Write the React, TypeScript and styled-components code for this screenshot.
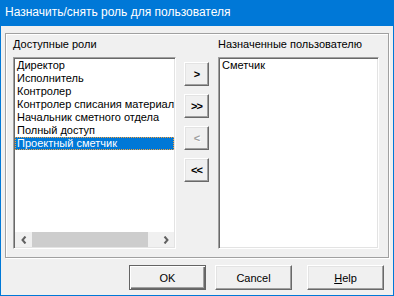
import React from "react";
import styled, { createGlobalStyle } from "styled-components";

const GlobalStyle = createGlobalStyle`
  html, body {
    margin: 0;
    padding: 0;
    background: #f0f0f0;
  }
  * {
    box-sizing: border-box;
  }
`;

const Window = styled.div`
  width: 394px;
  height: 296px;
  display: flex;
  flex-direction: column;
  background: #f0f0f0;
  font-family: "Liberation Sans", Arial, sans-serif;
  font-size: 11px;
  color: #000;
  overflow: hidden;
`;

const TitleBar = styled.div`
  height: 26px;
  flex: none;
  background: #0078d7;
  color: #fff;
  font-family: "Liberation Sans", Arial, sans-serif;
  font-size: 12px;
  line-height: 25px;
  padding-left: 5px;
  white-space: nowrap;
`;

const Body = styled.div`
  flex: 1;
  display: flex;
  flex-direction: column;
  border: 1px solid #0078d7;
  border-top: 0;
  padding: 7px 4px 0 4px;
`;

/* etched group frame */
const GroupBox = styled.div`
  height: 225px;
  border: 1px solid #a0a0a0;
  box-shadow: inset 1px 1px 0 #fff, 1px 1px 0 #fff;
  padding: 4px 0 0 7px;
  display: grid;
  grid-template-columns: 163px 25px 162px;
  column-gap: 8px;
  align-items: start;
`;

const Column = styled.div`
  display: flex;
  flex-direction: column;
`;

const RightColumn = styled(Column)`
  margin-left: 1px;
`;

const Label = styled.div`
  height: 13px;
  line-height: 13px;
  margin-bottom: 6px;
  white-space: nowrap;
`;

const ListBox = styled.div`
  height: 192px;
  background: #fff;
  border: 1px solid;
  border-color: #a0a0a0 #fff #fff #a0a0a0;
  box-shadow: inset 1px 1px 0 #696969, inset -1px -1px 0 #e3e3e3;
  padding: 1px;
  display: flex;
  flex-direction: column;
  overflow: hidden;
`;

const Items = styled.div`
  flex: 1;
  overflow: hidden;
`;

const Item = styled.div<{ $selected?: boolean }>`
  height: 13px;
  line-height: 13px;
  padding-left: 2px;
  white-space: nowrap;
  overflow: hidden;
  background: ${(p) => (p.$selected ? "#0078d7" : "transparent")};
  color: ${(p) => (p.$selected ? "#fff" : "#000")};
  outline: ${(p) => (p.$selected ? "1px dotted #f7a13a" : "none")};
  outline-offset: -1px;
`;

const ScrollBar = styled.div`
  height: 15px;
  flex: none;
  display: flex;
  align-items: stretch;
  background: #f0f0f0;
`;

const ScrollArrow = styled.div`
  width: 17px;
  display: flex;
  align-items: center;
  justify-content: center;
`;

const ScrollTrack = styled.div`
  flex: 1;
  display: flex;
`;

const ScrollThumb = styled.div`
  width: 116px;
  background: #cdcdcd;
`;

const MoveButtons = styled.div`
  margin-top: 24px;
  display: flex;
  flex-direction: column;
  gap: 8px;
`;

const RaisedButton = styled.button<{ $disabled?: boolean }>`
  margin: 0;
  padding: 0;
  font-family: "Liberation Sans", Arial, sans-serif;
  font-size: 11px;
  background: #f0f0f0;
  border: 1px solid;
  border-color: #fff #696969 #696969 #fff;
  box-shadow: inset -1px -1px 0 #a0a0a0, inset 1px 1px 0 #e3e3e3;
  color: ${(p) => (p.$disabled ? "#a0a0a0" : "#000")};
  text-shadow: ${(p) => (p.$disabled ? "1px 1px 0 #fff" : "none")};
  display: flex;
  align-items: center;
  justify-content: center;
`;

const ArrowButton = styled(RaisedButton)`
  width: 25px;
  height: 24px;
  font-weight: bold;
  letter-spacing: -1px;
`;

const Footer = styled.div`
  margin-top: 7px;
  padding-right: 5px;
  display: flex;
  justify-content: flex-end;
`;

const DialogButton = styled(RaisedButton)<{ $default?: boolean; $gap?: number }>`
  width: 77px;
  height: 25px;
  margin-left: ${(p) => p.$gap ?? 0}px;
  ${(p) =>
    p.$default &&
    `
    border-color: #646464;
    box-shadow: inset 1px 1px 0 #fff, inset -1px -1px 0 #696969, inset -2px -2px 0 #a0a0a0;
  `}
`;

const Chevron: React.FC<{ dir: "left" | "right" }> = ({ dir }) => (
  <svg width="6" height="8" viewBox="0 0 6 8">
    <path
      d={dir === "left" ? "M4.5 0.5 L1.5 4 L4.5 7.5" : "M1.5 0.5 L4.5 4 L1.5 7.5"}
      fill="none"
      stroke="#606060"
      strokeWidth="2"
    />
  </svg>
);

const available = [
  "Директор",
  "Исполнитель",
  "Контролер",
  "Контролер списания материал",
  "Начальник сметного отдела",
  "Полный доступ",
  "Проектный сметчик",
];

const assigned = ["Сметчик"];

const App: React.FC = () => {
  return (
    <>
      <GlobalStyle />
      <Window>
        <TitleBar>Назначить/снять роль для пользователя</TitleBar>
        <Body>
          <GroupBox>
            <Column>
              <Label>Доступные роли</Label>
              <ListBox>
                <Items>
                  {available.map((name, i) => (
                    <Item key={name} $selected={i === available.length - 1}>
                      {name}
                    </Item>
                  ))}
                </Items>
                <ScrollBar>
                  <ScrollArrow>
                    <Chevron dir="left" />
                  </ScrollArrow>
                  <ScrollTrack>
                    <ScrollThumb />
                  </ScrollTrack>
                  <ScrollArrow>
                    <Chevron dir="right" />
                  </ScrollArrow>
                </ScrollBar>
              </ListBox>
            </Column>

            <MoveButtons>
              <ArrowButton>&gt;</ArrowButton>
              <ArrowButton>&gt;&gt;</ArrowButton>
              <ArrowButton $disabled>&lt;</ArrowButton>
              <ArrowButton>&lt;&lt;</ArrowButton>
            </MoveButtons>

            <RightColumn>
              <Label>Назначенные пользователю</Label>
              <ListBox>
                <Items>
                  {assigned.map((name) => (
                    <Item key={name}>{name}</Item>
                  ))}
                </Items>
              </ListBox>
            </RightColumn>
          </GroupBox>

          <Footer>
            <DialogButton $default>OK</DialogButton>
            <DialogButton $gap={9}>Cancel</DialogButton>
            <DialogButton $gap={15}>
              <u>H</u>elp
            </DialogButton>
          </Footer>
        </Body>
      </Window>
    </>
  );
};

export default App;
